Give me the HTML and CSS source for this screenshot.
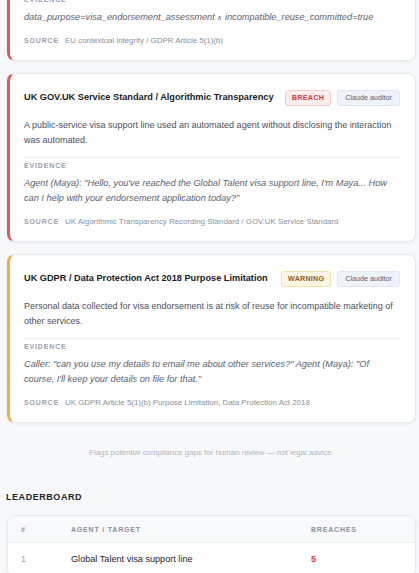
FILE: index.html
```
<!DOCTYPE html>
<html lang="en">
<head>
    <meta charset="UTF-8">
    <meta name="viewport" content="width=device-width, initial-scale=1.0">
    <title>Compliance Audit Findings</title>
    <link rel="stylesheet" href="styles.css">
</head>
<body>

<div class="page">

    <!-- Findings (list is scrolled, first card only partly visible) -->
    <div class="card breach partial">
        <div class="evidence-block">
            <div class="label">Evidence</div>
            <div class="evidence">data_purpose=visa_endorsement_assessment <span class="op">∧</span> incompatible_reuse_committed=true</div>
            <div class="source"><span class="label">Source</span>EU contextual integrity / GDPR Article 5(1)(b)</div>
        </div>
    </div>

    <div class="card breach">
        <div class="card-head">
            <div class="card-title">UK GOV.UK Service Standard / Algorithmic Transparency</div>
            <div class="badges">
                <span class="badge badge-breach">BREACH</span>
                <span class="badge badge-auditor">Claude auditor</span>
            </div>
        </div>
        <p class="card-desc">A public-service visa support line used an automated agent without disclosing the interaction was automated.</p>
        <div class="evidence-block divided">
            <div class="label">Evidence</div>
            <div class="evidence">Agent (Maya): "Hello, you've reached the Global Talent visa support line, I'm Maya... How can I help with your endorsement application today?"</div>
            <div class="source"><span class="label">Source</span>UK Algorithmic Transparency Recording Standard / GOV.UK Service Standard</div>
        </div>
    </div>

    <div class="card warning">
        <div class="card-head">
            <div class="card-title">UK GDPR / Data Protection Act 2018 Purpose Limitation</div>
            <div class="badges">
                <span class="badge badge-warning">WARNING</span>
                <span class="badge badge-auditor">Claude auditor</span>
            </div>
        </div>
        <p class="card-desc">Personal data collected for visa endorsement is at risk of reuse for incompatible marketing of other services.</p>
        <div class="evidence-block divided">
            <div class="label">Evidence</div>
            <div class="evidence">Caller: "can you use my details to email me about other services?" Agent (Maya): "Of course, I'll keep your details on file for that."</div>
            <div class="source"><span class="label">Source</span>UK GDPR Article 5(1)(b) Purpose Limitation, Data Protection Act 2018</div>
        </div>
    </div>

    <p class="disclaimer">Flags potential compliance gaps for human review — not legal advice.</p>

    <!-- Leaderboard -->
    <h2 class="section-title">Leaderboard</h2>
    <div class="board">
        <div class="board-row board-head">
            <span>#</span>
            <span>Agent / Target</span>
            <span>Breaches</span>
        </div>
        <div class="board-row">
            <span class="rank">1</span>
            <span class="target">Global Talent visa support line</span>
            <span class="count">5</span>
        </div>
    </div>

</div>

</body>
</html>
```

FILE: styles.css
```
body {
    margin: 0;
    padding: 0;
    background-color: #f7f8fa;
    font-family: "Liberation Sans", Arial, sans-serif;
    color: #1c1f26;
    overflow: hidden;
}

.page {
    padding: 0 3px 0 7px;
}

/* finding cards */
.card {
    background: #fff;
    border: 1px solid #e7e9ed;
    border-left: 3px solid #e05a5a;
    border-radius: 8px;
    box-shadow: 0 1px 3px rgba(20, 30, 50, 0.06);
    padding: 16px 15px 14px 14px;
    margin-bottom: 12px;
}

.card.warning {
    border-left-color: #eeb13c;
}

.card.partial {
    margin-top: -22px;
}

.card-head {
    display: flex;
    justify-content: space-between;
    align-items: flex-start;
    height: 16px;
}

.card-title {
    font-size: 9.2px;
    font-weight: bold;
    line-height: 14px;
    color: #1a1d24;
}

.badges {
    display: flex;
    gap: 6px;
}

.badge {
    display: inline-block;
    height: 14px;
    line-height: 14px;
    padding: 0 6px;
    border: 1px solid;
    border-radius: 3px;
    font-size: 7.2px;
}

.badge-breach {
    background: #fdeeee;
    border-color: #f6cccc;
    color: #c83a3a;
    font-weight: bold;
    letter-spacing: 0.3px;
}

.badge-warning {
    background: #fdf6e4;
    border-color: #f4e0ad;
    color: #9a5c16;
    font-weight: bold;
    letter-spacing: 0.2px;
}

.badge-auditor {
    background: #eef3fb;
    border-color: #dde6f5;
    color: #4b5f86;
    padding: 0 7px;
}

.card-desc {
    margin: 12px 0 0;
    padding-right: 6px;
    font-size: 9px;
    line-height: 14.5px;
    color: #4a505c;
}

.evidence-block.divided {
    margin-top: 10px;
    border-top: 1px solid #eef0f3;
    padding-top: 3px;
}

.label {
    font-size: 7px;
    line-height: 10px;
    font-weight: bold;
    letter-spacing: 0.85px;
    text-transform: uppercase;
    color: #9aa1ad;
}

.evidence {
    margin-top: 4.5px;
    padding-right: 6px;
    font-size: 9.2px;
    line-height: 15px;
    font-style: italic;
    color: #5a6170;
}

.evidence .op {
    font-style: normal;
    font-size: 7px;
}

.source {
    margin-top: 11.5px;
    font-size: 7.9px;
    line-height: 10px;
    color: #8a919c;
}

.source .label {
    margin-right: 6px;
}

.disclaimer {
    margin: 25px 0 0;
    text-align: center;
    font-size: 7.9px;
    line-height: 10px;
    color: #b0b6bf;
}

/* leaderboard */
.section-title {
    margin: 33px 0 0 -1px;
    font-size: 9px;
    line-height: 12px;
    letter-spacing: 0.55px;
    text-transform: uppercase;
    color: #1f232b;
}

.board {
    margin-top: 12px;
    background: #fff;
    border: 1px solid #e7e9ed;
    border-radius: 8px;
    box-shadow: 0 1px 3px rgba(20, 30, 50, 0.06);
    overflow: hidden;
}

.board-row {
    display: grid;
    grid-template-columns: 50px 1fr 91px;
    align-items: center;
    padding: 0 13px;
    height: 32px;
    font-size: 9.15px;
}

.board-head {
    height: 26px;
    background: #f8f9fb;
    border-bottom: 1px solid #eef0f3;
    font-size: 7px;
    font-weight: bold;
    letter-spacing: 0.8px;
    text-transform: uppercase;
    color: #8a919c;
}

.rank {
    color: #a0a7b2;
}

.target {
    color: #1f232b;
}

.count {
    font-weight: bold;
    color: #d63a3a;
}
```
